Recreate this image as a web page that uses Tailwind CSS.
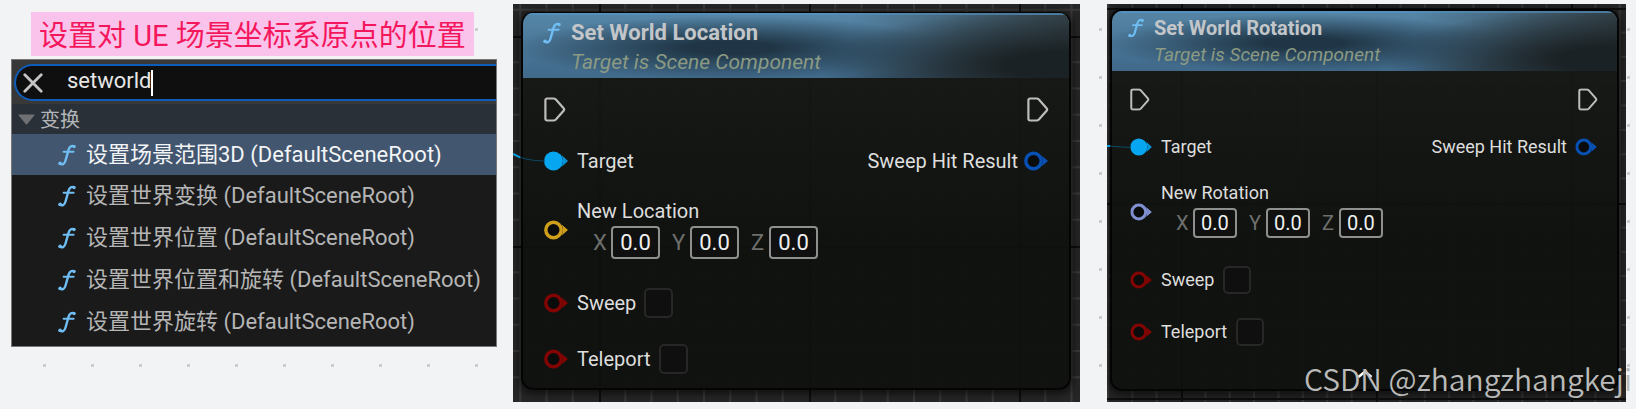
<!DOCTYPE html>
<html lang="zh-CN">
<head>
<meta charset="utf-8">
<meta name="viewport" content="width=device-width, initial-scale=1">
<title>Set World Location / Rotation</title>
<script src="https://cdn.jsdelivr.net/npm/@tailwindcss/browser@4"></script>
</head>
<body class="min-h-screen bg-[#f2f3f5] bg-[conic-gradient(from_270deg_at_3px_3px,#cccdcf_90deg,transparent_0)] bg-[length:48px_48px] bg-[position:43px_28px] font-['Roboto','Noto_Sans_CJK_SC',sans-serif]">

<!-- Shared symbols -->
<svg class="absolute size-0" aria-hidden="true">
  <defs>
    <symbol id="fn" viewBox="0 0 18 22">
      <path d="M1.5 19.6C4.6 21.2 6.6 20 7.6 16.2L10.6 5.6C11.4 2.6 13.4 1.2 16.2 2.2" fill="none" stroke="#6fbdf2" stroke-width="2.4" stroke-linecap="round"/>
      <path d="M5.6 7.8H15.6" stroke="#6fbdf2" stroke-width="2" stroke-linecap="round"/>
      <circle cx="16" cy="2.6" r="1.7" fill="#6fbdf2"/>
      <circle cx="2.2" cy="19.3" r="1.7" fill="#6fbdf2"/>
    </symbol>
    <symbol id="exec" viewBox="0 0 22 25">
      <path d="M3.2 1.5H9.6C10.6 1.5 11.2 1.8 11.9 2.5L19.6 11.3C20.3 12.1 20.3 12.9 19.6 13.7L11.9 22.5C11.2 23.2 10.6 23.5 9.6 23.5H3.2C2 23.5 1.4 22.9 1.4 21.7V3.3C1.4 2.1 2 1.5 3.2 1.5Z" fill="none" stroke="#bdbdbb" stroke-width="2.2"/>
    </symbol>
    <symbol id="pin" viewBox="0 0 25 20">
      <circle cx="9.5" cy="10" r="7.7" fill="#0a0b0b" stroke="currentColor" stroke-width="3.4"/>
      <path d="M17.6 4.4L24 10L17.6 15.6Q20 10 17.6 4.4Z" fill="currentColor"/>
    </symbol>
    <symbol id="pin-filled" viewBox="0 0 25 20">
      <circle cx="9.5" cy="10" r="9.5" fill="#06a6f0"/>
      <path d="M17.6 4L24 10L17.6 16Q20.4 10 17.6 4Z" fill="#0592d6"/>
    </symbol>
    <pattern id="grid-a" width="210" height="210" x="86" y="32" patternUnits="userSpaceOnUse">
      <path d="M26.25 0V210M52.5 0V210M78.75 0V210M105 0V210M131.25 0V210M157.5 0V210M183.75 0V210M0 26.25H210M0 52.5H210M0 78.75H210M0 105H210M0 131.25H210M0 157.5H210M0 183.75H210" stroke="#393939" stroke-width="2"/>
      <path d="M1 0V210M0 1H210" stroke="#0e0e0e" stroke-width="2"/>
    </pattern>
    <pattern id="grid-b" width="195" height="195" x="74" y="4" patternUnits="userSpaceOnUse">
      <path d="M24.4 0V195M48.8 0V195M73.1 0V195M97.5 0V195M121.9 0V195M146.3 0V195M170.6 0V195M0 24.4H195M0 48.8H195M0 73.1H195M0 97.5H195M0 121.9H195M0 146.3H195M0 170.6H195" stroke="#393939" stroke-width="2"/>
      <path d="M1 0V195M0 1H195" stroke="#0e0e0e" stroke-width="2"/>
    </pattern>
  </defs>
</svg>

<main class="grid grid-cols-[486fr_583fr_546fr] items-start pl-[11px] pr-[10px]">

  <!-- Search column -->
  <section class="flex min-w-0 flex-col pt-3">
    <h1 class="ml-5 self-start whitespace-nowrap bg-[#f9c3ec] px-2 pt-1 text-[29px] leading-10 text-[#f5175c]">设置对 UE 场景坐标系原点的位置</h1>

    <div class="mt-[3px] overflow-hidden border border-[#777] bg-[#1a1a1a] pb-[3px]">
      <div class="bg-[#383838] pt-1 pb-[3px] pl-[2px]">
        <div class="flex h-[37px] items-center rounded-l-full border-2 border-r-0 border-[#0f5db8] bg-[#0f0f0f] pl-[7px]">
          <button type="button" aria-label="清除" class="flex size-5 items-center justify-center">
            <svg class="size-5" viewBox="0 0 20 20" fill="none" stroke="#c4c4c4" stroke-width="2.8" stroke-linecap="round"><path d="M1.8 1.8L18.2 18.2M18.2 1.8L1.8 18.2"/></svg>
          </button>
          <input type="text" aria-label="搜索" value="setworld" class="ml-6 w-[84px] bg-transparent pb-1 text-[22px] leading-7 text-[#e6e6e6] outline-none">
          <span class="h-[26px] w-[2px] bg-white"></span>
        </div>
      </div>
      <div class="flex h-[30px] items-center bg-[#2a3038] pl-[6px]">
        <svg class="h-[11px] w-[17px]" viewBox="0 0 17 11"><path d="M1 .5H16Q17 .7 16.3 1.6L9.3 10Q8.5 11 7.7 10L.7 1.6Q0 .7 1 .5Z" fill="#6e7073"/></svg>
        <span class="ml-[5px] pt-[2px] text-[20px] leading-7 text-[#b4b6b9]">变换</span>
      </div>
      <ul class="whitespace-nowrap text-[22px] leading-7 text-[#b5b5b5]">
        <li class="flex h-[41px] items-center gap-[10px] bg-[#42566f] pl-[46px] text-[#f2f4f6]"><svg class="h-[22px] w-[18px] shrink-0"><use href="#fn"/></svg>设置场景范围3D (DefaultSceneRoot)</li>
        <li class="flex h-[42px] items-center gap-[10px] pl-[46px]"><svg class="h-[22px] w-[18px] shrink-0"><use href="#fn"/></svg>设置世界变换 (DefaultSceneRoot)</li>
        <li class="flex h-[42px] items-center gap-[10px] pl-[46px]"><svg class="h-[22px] w-[18px] shrink-0"><use href="#fn"/></svg>设置世界位置 (DefaultSceneRoot)</li>
        <li class="flex h-[42px] items-center gap-[10px] pl-[46px]"><svg class="h-[22px] w-[18px] shrink-0"><use href="#fn"/></svg>设置世界位置和旋转 (DefaultSceneRoot)</li>
        <li class="flex h-[42px] items-center gap-[10px] pl-[46px]"><svg class="h-[22px] w-[18px] shrink-0"><use href="#fn"/></svg>设置世界旋转 (DefaultSceneRoot)</li>
      </ul>
    </div>
  </section>

  <!-- Set World Location -->
  <section class="relative mt-1 ml-4 min-w-0 overflow-hidden bg-[#262626] pt-2 pr-[9px] pb-3 pl-2">
    <svg class="absolute inset-0 size-full" aria-hidden="true"><rect width="100%" height="100%" fill="url(#grid-a)"/></svg>
    <article class="relative overflow-hidden rounded-xl border-2 border-t-1 border-black/80 bg-linear-to-b from-[#191b18]/95 to-[#0f110e]/95 to-60% pb-[14px] text-[20px] leading-6 text-[#dedede] shadow-[0_2px_8px_2px_rgba(0,0,0,0.6)]">
      <header class="flex h-[65px] items-start border-t-2 border-[#5e9fd0]/70 bg-[radial-gradient(ellipse_40%_50%_at_38%_52%,#203646_20%,#20364600),radial-gradient(ellipse_46%_90%_at_100%_80%,#1b2225_25%,#1b222500),linear-gradient(to_right,#36444b00_60%,#36444b),linear-gradient(to_bottom,#5585a6,#40698a)] pt-1 pl-5">
        <svg class="mt-[3px] h-[22px] w-[18px] shrink-0"><use href="#fn"/></svg>
        <div class="ml-[10px] whitespace-nowrap">
          <h2 class="text-[22px] leading-7 font-bold text-[#c3c6c9]">Set World Location</h2>
          <p class="text-[21px] leading-[30px] text-[#8b9a83] italic">Target is Scene Component</p>
        </div>
      </header>
      <div class="pr-5 pl-[21px]">
        <div class="mt-[11px] flex h-10 items-center justify-between">
          <svg class="h-[25px] w-[22px]"><use href="#exec"/></svg>
          <svg class="h-[25px] w-[22px]"><use href="#exec"/></svg>
        </div>
        <div class="mt-3 flex h-10 items-center">
          <svg class="h-5 w-[25px]"><use href="#pin-filled"/></svg>
          <span class="ml-2">Target</span>
          <span class="ml-auto">Sweep Hit Result</span>
          <svg class="ml-[6px] h-5 w-[25px] text-[#0850b4]"><use href="#pin"/></svg>
        </div>
        <div class="mt-5 flex items-center">
          <svg class="h-5 w-[25px] text-[#cf9f1c]"><use href="#pin"/></svg>
          <fieldset class="ml-2">
            <legend class="h-[25px] leading-5">New Location</legend>
            <div class="flex h-[33px] items-center pl-4 text-[22px] text-[#6e6f6d]">
              <label for="lx" class="w-[18px]">X</label><input id="lx" value="0.0" class="h-[33px] w-[49px] rounded-sm border-2 border-[#8e908d] bg-[#0f0f0f]/60 text-center text-[#f0f0f0]">
              <label for="ly" class="ml-3 w-[18px]">Y</label><input id="ly" value="0.0" class="h-[33px] w-[49px] rounded-sm border-2 border-[#8e908d] bg-[#0f0f0f]/60 text-center text-[#f0f0f0]">
              <label for="lz" class="ml-3 w-[18px]">Z</label><input id="lz" value="0.0" class="h-[33px] w-[49px] rounded-sm border-2 border-[#8e908d] bg-[#0f0f0f]/60 text-center text-[#f0f0f0]">
            </div>
          </fieldset>
        </div>
        <div class="mt-[29px] flex h-[30px] items-center">
          <svg class="h-5 w-[25px] text-[#820504]"><use href="#pin"/></svg>
          <label for="lsweep" class="ml-2">Sweep</label>
          <input id="lsweep" type="checkbox" class="ml-2 h-[30px] w-[29px] appearance-none rounded-[5px] border-2 border-[#262726] bg-[#0f0f0f]">
        </div>
        <div class="mt-[26px] flex h-[30px] items-center">
          <svg class="h-5 w-[25px] text-[#820504]"><use href="#pin"/></svg>
          <label for="ltele" class="ml-2">Teleport</label>
          <input id="ltele" type="checkbox" class="ml-2 h-[30px] w-[29px] appearance-none rounded-[5px] border-2 border-[#262726] bg-[#0f0f0f]">
        </div>
      </div>
    </article>
    <!-- Incoming wire -->
    <svg class="absolute top-[146px] left-0 h-4 w-8" viewBox="0 0 32 16" fill="none"><path d="M0 4Q12 11 32 11" stroke="#0b4a66" stroke-width="1"/><path d="M0 4L7 7.4" stroke="#0aa0e6" stroke-width="2"/></svg>
  </section>

  <!-- Set World Rotation -->
  <section class="relative mt-1 ml-[27px] min-w-0 overflow-hidden bg-[#262626] pt-[5px] pr-[7px] pb-[11px] pl-[3px]">
    <svg class="absolute inset-0 size-full" aria-hidden="true"><rect width="100%" height="100%" fill="url(#grid-b)"/></svg>
    <article class="relative overflow-hidden rounded-xl border-2 border-black/80 bg-linear-to-b from-[#191b18]/95 to-[#0f110e]/95 to-60% pb-[11px] text-[18px] leading-6 text-[#dedede] shadow-[0_2px_8px_2px_rgba(0,0,0,0.6)]">
      <header class="flex h-[60px] items-start border-t-2 border-[#5e9fd0]/70 bg-[radial-gradient(ellipse_40%_50%_at_38%_52%,#203646_20%,#20364600),radial-gradient(ellipse_46%_90%_at_100%_80%,#1b2225_25%,#1b222500),linear-gradient(to_right,#36444b00_60%,#36444b),linear-gradient(to_bottom,#5585a6,#40698a)] pt-px pl-4">
        <svg class="mt-1 h-5 w-4 shrink-0" viewBox="0 0 18 22"><use href="#fn" width="18" height="22"/></svg>
        <div class="ml-[10px] whitespace-nowrap">
          <h2 class="text-[20px] leading-7 font-bold text-[#c3c6c9]">Set World Rotation</h2>
          <p class="text-[19px] leading-[26px] text-[#8b9a83] italic">Target is Scene Component</p>
        </div>
      </header>
      <div class="pr-[19px] pl-[18px]">
        <div class="mt-2 flex h-10 items-center justify-between">
          <svg class="h-[23px] w-5" viewBox="0 0 22 25"><use href="#exec" width="22" height="25"/></svg>
          <svg class="h-[23px] w-5" viewBox="0 0 22 25"><use href="#exec" width="22" height="25"/></svg>
        </div>
        <div class="mt-2 flex h-10 items-center">
          <svg class="h-[18px] w-[23px]" viewBox="0 0 25 20"><use href="#pin-filled" width="25" height="20"/></svg>
          <span class="ml-2">Target</span>
          <span class="ml-auto">Sweep Hit Result</span>
          <svg class="ml-2 h-[18px] w-[23px] text-[#0850b4]" viewBox="0 0 25 20"><use href="#pin" width="25" height="20"/></svg>
        </div>
        <div class="mt-4 flex items-center">
          <svg class="mt-[3px] h-[18px] w-[23px] text-[#7f8fd0]" viewBox="0 0 25 20"><use href="#pin" width="25" height="20"/></svg>
          <fieldset class="ml-2">
            <legend class="h-[25px] leading-5">New Rotation</legend>
            <div class="flex h-[30px] items-center pl-[15px] text-[20px] text-[#6e6f6d]">
              <label for="rx" class="w-[17px]">X</label><input id="rx" value="0.0" class="h-[30px] w-11 rounded-sm border-2 border-[#8e908d] bg-[#0f0f0f]/60 text-center text-[#f0f0f0]">
              <label for="ry" class="ml-3 w-[17px]">Y</label><input id="ry" value="0.0" class="h-[30px] w-11 rounded-sm border-2 border-[#8e908d] bg-[#0f0f0f]/60 text-center text-[#f0f0f0]">
              <label for="rz" class="ml-3 w-[17px]">Z</label><input id="rz" value="0.0" class="h-[30px] w-11 rounded-sm border-2 border-[#8e908d] bg-[#0f0f0f]/60 text-center text-[#f0f0f0]">
            </div>
          </fieldset>
        </div>
        <div class="mt-7 flex h-[27px] items-center">
          <svg class="h-[18px] w-[23px] text-[#820504]" viewBox="0 0 25 20"><use href="#pin" width="25" height="20"/></svg>
          <label for="rsweep" class="ml-2">Sweep</label>
          <input id="rsweep" type="checkbox" class="ml-[9px] size-7 appearance-none rounded-[5px] border-2 border-[#262726] bg-[#0f0f0f]">
        </div>
        <div class="mt-[25px] flex h-[27px] items-center">
          <svg class="h-[18px] w-[23px] text-[#820504]" viewBox="0 0 25 20"><use href="#pin" width="25" height="20"/></svg>
          <label for="rtele" class="ml-2">Teleport</label>
          <input id="rtele" type="checkbox" class="ml-[9px] size-7 appearance-none rounded-[5px] border-2 border-[#262726] bg-[#0f0f0f]">
        </div>
      </div>
      <button type="button" aria-label="Collapse" class="mt-[25px] flex w-full justify-center">
        <svg class="h-2 w-4" viewBox="0 0 16 8" fill="none" stroke="#fff" stroke-width="2.4"><path d="M1.5 7L8 1.6L14.5 7"/></svg>
      </button>
    </article>
    <!-- Incoming wire -->
    <svg class="absolute top-[136px] left-0 h-4 w-6" viewBox="0 0 24 16" fill="none"><path d="M0 6L24 7.5" stroke="#0b4a66" stroke-width="1"/><path d="M0 6H3" stroke="#0aa0e6" stroke-width="2"/></svg>
  </section>
</main>

<!-- Watermark -->
<div class="pointer-events-none absolute right-1 bottom-[11px] whitespace-nowrap font-['Noto_Sans_CJK_SC',sans-serif] text-[30px] leading-10 font-[350] text-[#b9bab9]">CSDN @zhangzhangkeji</div>
</body>
</html>
